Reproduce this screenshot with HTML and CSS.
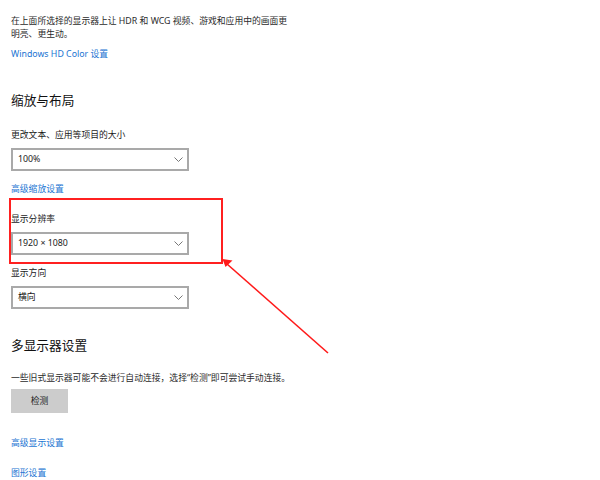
FILE: index.html
```html
<!DOCTYPE html>
<html lang="zh-CN">
<head>
<meta charset="utf-8">
<link rel="stylesheet" href="styles.css">
</head>
<body>
<div class="page">
  <p class="desc">在上面所选择的显示器上让 HDR 和 WCG 视频、游戏和应用中的画面更<br>明亮、更生动。</p>
  <a class="link link-hd">Windows HD Color 设置</a>

  <h2 class="heading heading-scale">缩放与布局</h2>
  <div class="label label-size">更改文本、应用等项目的大小</div>
  <div class="select"><span>100%</span><svg class="chev" width="9" height="5" viewBox="0 0 9 5"><path d="M0.5 0.5 L4.5 4.5 L8.5 0.5" fill="none" stroke="#777" stroke-width="1"/></svg></div>
  <a class="link link-adv">高级缩放设置</a>

  <div class="label label-res">显示分辨率</div>
  <div class="select"><span>1920 × 1080</span><svg class="chev" width="9" height="5" viewBox="0 0 9 5"><path d="M0.5 0.5 L4.5 4.5 L8.5 0.5" fill="none" stroke="#777" stroke-width="1"/></svg></div>

  <div class="label label-orient">显示方向</div>
  <div class="select"><span>横向</span><svg class="chev" width="9" height="5" viewBox="0 0 9 5"><path d="M0.5 0.5 L4.5 4.5 L8.5 0.5" fill="none" stroke="#777" stroke-width="1"/></svg></div>

  <h2 class="heading heading-multi">多显示器设置</h2>
  <p class="desc desc-multi">一些旧式显示器可能不会进行自动连接，选择“检测”即可尝试手动连接。</p>
  <div class="button">检测</div>

  <a class="link link-display">高级显示设置</a>
  <a class="link link-graphics">图形设置</a>

  <div class="highlight"></div>
  <svg class="arrow" width="600" height="480" viewBox="0 0 600 480">
    <line x1="328" y1="353" x2="227" y2="264" stroke="#ff1a1a" stroke-width="1.6"/>
    <polygon points="222.5,259 232.5,260.5 225.5,267" fill="#ff1a1a"/>
  </svg>
</div>
</body>
</html>
```

FILE: styles.css
```css
html, body {
  margin: 0;
  padding: 0;
  background: #ffffff;
}

.page {
  position: relative;
  width: 600px;
  height: 480px;
  box-sizing: border-box;
  padding: 15px 0 0 11px;
  font-family: "Noto Sans", "Noto Sans CJK SC", sans-serif;
  font-size: 8.8px;
  line-height: 13px;
  color: #1a1a1a;
  overflow: hidden;
  display: flex;
  flex-direction: column;
  align-items: flex-start;
}

.desc {
  margin: 0;
  color: #2b2b2b;
}

.link {
  display: block;
  color: #1a74d2;
  text-decoration: none;
}

.link-hd { margin-top: 7px; }
.link-adv { margin-top: 12px; }
.link-display { margin-top: 24px; }
.link-graphics { margin-top: 17px; }

.heading {
  margin: 0;
  font-weight: normal;
  font-size: 12.7px;
  line-height: 17px;
  color: #111;
}

.heading-scale { margin-top: 31px; }
.heading-multi { margin-top: 28px; }

.label-size { margin-top: 20px; }
.label-res { margin-top: 17px; }
.label-orient { margin-top: 12px; }

.select {
  margin-top: 6px;
  width: 178px;
  height: 23px;
  box-sizing: border-box;
  border: 2px solid #a9a9a9;
  padding: 0 4px 0 5px;
  display: flex;
  align-items: center;
  justify-content: space-between;
  color: #1a1a1a;
}

.chev {
  display: block;
}

.desc-multi { margin-top: 18px; }

.button {
  margin-top: 4px;
  width: 57px;
  height: 24px;
  background: #cccccc;
  display: flex;
  align-items: center;
  justify-content: center;
  color: #1a1a1a;
}

.highlight {
  position: absolute;
  left: 9px;
  top: 198px;
  width: 214px;
  height: 66px;
  box-sizing: border-box;
  border: 2px solid #ff2020;
}

.arrow {
  position: absolute;
  left: 0;
  top: 0;
}
```
